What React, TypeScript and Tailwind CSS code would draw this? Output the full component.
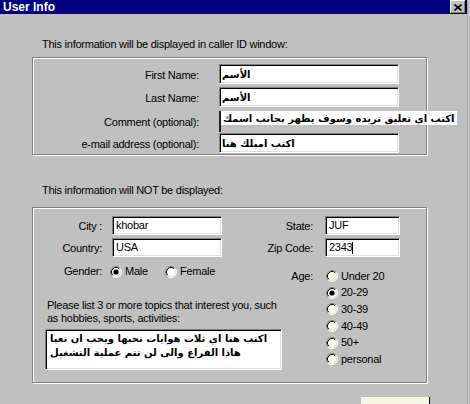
import React from 'react';

const sunken =
  'bg-white border border-t-[#808080] border-l-[#808080] border-r-white border-b-white shadow-[inset_1px_1px_0_#000,inset_-1px_-1px_0_#dfdfdf]';
const etched = 'border border-[#808080] shadow-[inset_1px_1px_0_#fff,1px_1px_0_#fff]';
const arabic = "font-['DejaVu_Sans',sans-serif] font-bold text-[10px] tracking-normal";

function Radio({ checked = false }: { checked?: boolean }) {
  return (
    <svg width="12" height="12" viewBox="0 0 12 12" className="shrink-0">
      <circle cx="6" cy="6" r="5" fill="#fffff4" />
      <path d="M2.11 9.89 A5.5 5.5 0 0 1 9.89 2.11" stroke="#808080" fill="none" />
      <path d="M9.89 2.11 A5.5 5.5 0 0 1 2.11 9.89" stroke="#ffffff" fill="none" />
      <path d="M2.82 9.18 A4.5 4.5 0 0 1 9.18 2.82" stroke="#000" fill="none" />
      <path d="M9.18 2.82 A4.5 4.5 0 0 1 2.82 9.18" stroke="#dfdfdf" fill="none" />
      {checked && <circle cx="6" cy="6" r="2.6" fill="#000" />}
    </svg>
  );
}

function Option({ label, checked, className = '' }: { label: string; checked?: boolean; className?: string }) {
  return (
    <div className={`flex items-center gap-[3px] ${className}`}>
      <Radio checked={checked} />
      <span>{label}</span>
    </div>
  );
}

function InfoRow({ label, children, top }: { label: string; children: React.ReactNode; top: string }) {
  return (
    <div className={`flex items-center gap-[20px] ${top}`}>
      <div className="w-[166px] text-right mt-[2px]">{label}</div>
      {children}
    </div>
  );
}

export default function App() {
  const ages = ['Under 20', '20-29', '30-39', '40-49', '50+', 'personal'];

  return (
    <div className="w-[470px] h-[404px] overflow-hidden bg-[#c0c0c0] flex font-['Liberation_Sans',Arial,sans-serif] text-[11px] leading-[13px] tracking-[-0.25px] text-black">
      <div className="w-[467px] shrink-0 flex flex-col">
        <div className="h-[18px] bg-[#000080] flex items-center pl-[3px] pr-[1px]">
          <span className="text-white font-bold text-[12px] tracking-normal">User Info</span>
          <button className="ml-auto w-[16px] h-[14px] flex items-center justify-center bg-[#c0c0c0] shadow-[inset_-1px_-1px_0_#000,inset_1px_1px_0_#fff,inset_-2px_-2px_0_#808080]">
            <svg width="8" height="7" viewBox="0 0 8 7">
              <path d="M0.5 0.5 L7.5 6.5 M7.5 0.5 L0.5 6.5" stroke="#000" strokeWidth="1.6" />
            </svg>
          </button>
        </div>

        <div className="pl-[32px] flex flex-col">
          <div className="mt-[24px] pl-[10px]">This information will be displayed in caller ID window:</div>

          <div className={`mt-[6px] w-[395px] h-[98px] pt-[6px] flex flex-col ${etched}`}>
            <InfoRow label="First Name:" top="">
              <div className={`w-[180px] h-[20px] flex items-center pl-[2px] ${sunken}`}>
                <span className={arabic}>الأسم</span>
              </div>
            </InfoRow>
            <InfoRow label="Last Name:" top="mt-[3px]">
              <div className={`w-[180px] h-[20px] flex items-center pl-[2px] ${sunken}`}>
                <span className={arabic}>الأسم</span>
              </div>
            </InfoRow>
            <InfoRow label="Comment (optional):" top="mt-[4px]">
              <div className="w-[180px] h-[21px] border-l-2 border-[#202020]">
                <div className="w-[236px] h-[14px] bg-white flex items-center pl-[2px] whitespace-nowrap">
                  <span className={arabic}>اكتب اي تعليق تريده وسوف يظهر بجانب اسمك</span>
                </div>
              </div>
            </InfoRow>
            <InfoRow label="e-mail address (optional):" top="mt-[1px]">
              <div className={`w-[180px] h-[20px] flex items-center pl-[2px] ${sunken}`}>
                <span className={arabic}>اكتب اميلك هنا</span>
              </div>
            </InfoRow>
          </div>

          <div className="mt-[29px] pl-[10px]">This information will NOT be displayed:</div>

          <div className={`mt-[10px] w-[395px] h-[176px] grid grid-cols-[217px_1fr] ${etched}`}>
            <div className="flex flex-col pt-[8px] min-w-0">
              <div className="flex items-center gap-[10px]">
                <div className="w-[69px] text-right mt-[1px]">City :</div>
                <div className={`w-[110px] h-[19px] flex items-center pl-[3px] ${sunken}`}>khobar</div>
              </div>
              <div className="flex items-center gap-[10px] mt-[3px]">
                <div className="w-[69px] text-right mt-[1px]">Country:</div>
                <div className={`w-[110px] h-[19px] flex items-center pl-[3px] ${sunken}`}>USA</div>
              </div>
              <div className="flex items-center mt-[8px]">
                <div className="w-[69px] text-right">Gender:</div>
                <Option label="Male" checked className="ml-[8px] w-[55px]" />
                <Option label="Female" />
              </div>
              <div className="mt-[21px] pl-[14px] w-[260px] whitespace-nowrap">
                Please list 3 or more topics that interest you, such
                <br />
                as hobbies, sports, activities:
              </div>
              <div className={`mt-[4px] ml-[12px] w-[237px] h-[41px] shrink-0 pl-[4px] pt-[2px] leading-[14px] ${sunken}`}>
                <div className={`${arabic} whitespace-nowrap`}>اكتب هنا اي ثلاث هوايات تحبها ويجب ان تعبا</div>
                <div className={`${arabic} whitespace-nowrap`}>هاذا الفراغ والى لن تتم عملية التشغيل</div>
              </div>
            </div>

            <div className="flex flex-col pt-[8px]">
              <div className="flex items-center gap-[12px]">
                <div className="w-[63px] text-right mt-[1px]">State:</div>
                <div className={`w-[75px] h-[19px] flex items-center pl-[3px] ${sunken}`}>JUF</div>
              </div>
              <div className="flex items-center gap-[12px] mt-[3px]">
                <div className="w-[63px] text-right mt-[1px] whitespace-nowrap">Zip Code:</div>
                <div className={`w-[75px] h-[19px] flex items-center pl-[3px] ${sunken}`}>
                  2343<span className="inline-block w-[1px] h-[12px] bg-black" />
                </div>
              </div>
              <div className="flex mt-[11px] gap-[13px]">
                <div className="w-[63px] h-[16.6px] flex items-center justify-end">Age:</div>
                <div className="flex flex-col">
                  {ages.map((a) => (
                    <Option key={a} label={a} checked={a === '20-29'} className="h-[16.6px]" />
                  ))}
                </div>
              </div>
            </div>
          </div>

          <div className="mt-[14px] ml-[329px] w-[69px] h-[20px] shrink-0 bg-[#f6f6e6] border-r border-black" />
        </div>
      </div>
      <div className="w-[3px] shrink-0 border-l border-[#a8a8a8]" />
    </div>
  );
}
